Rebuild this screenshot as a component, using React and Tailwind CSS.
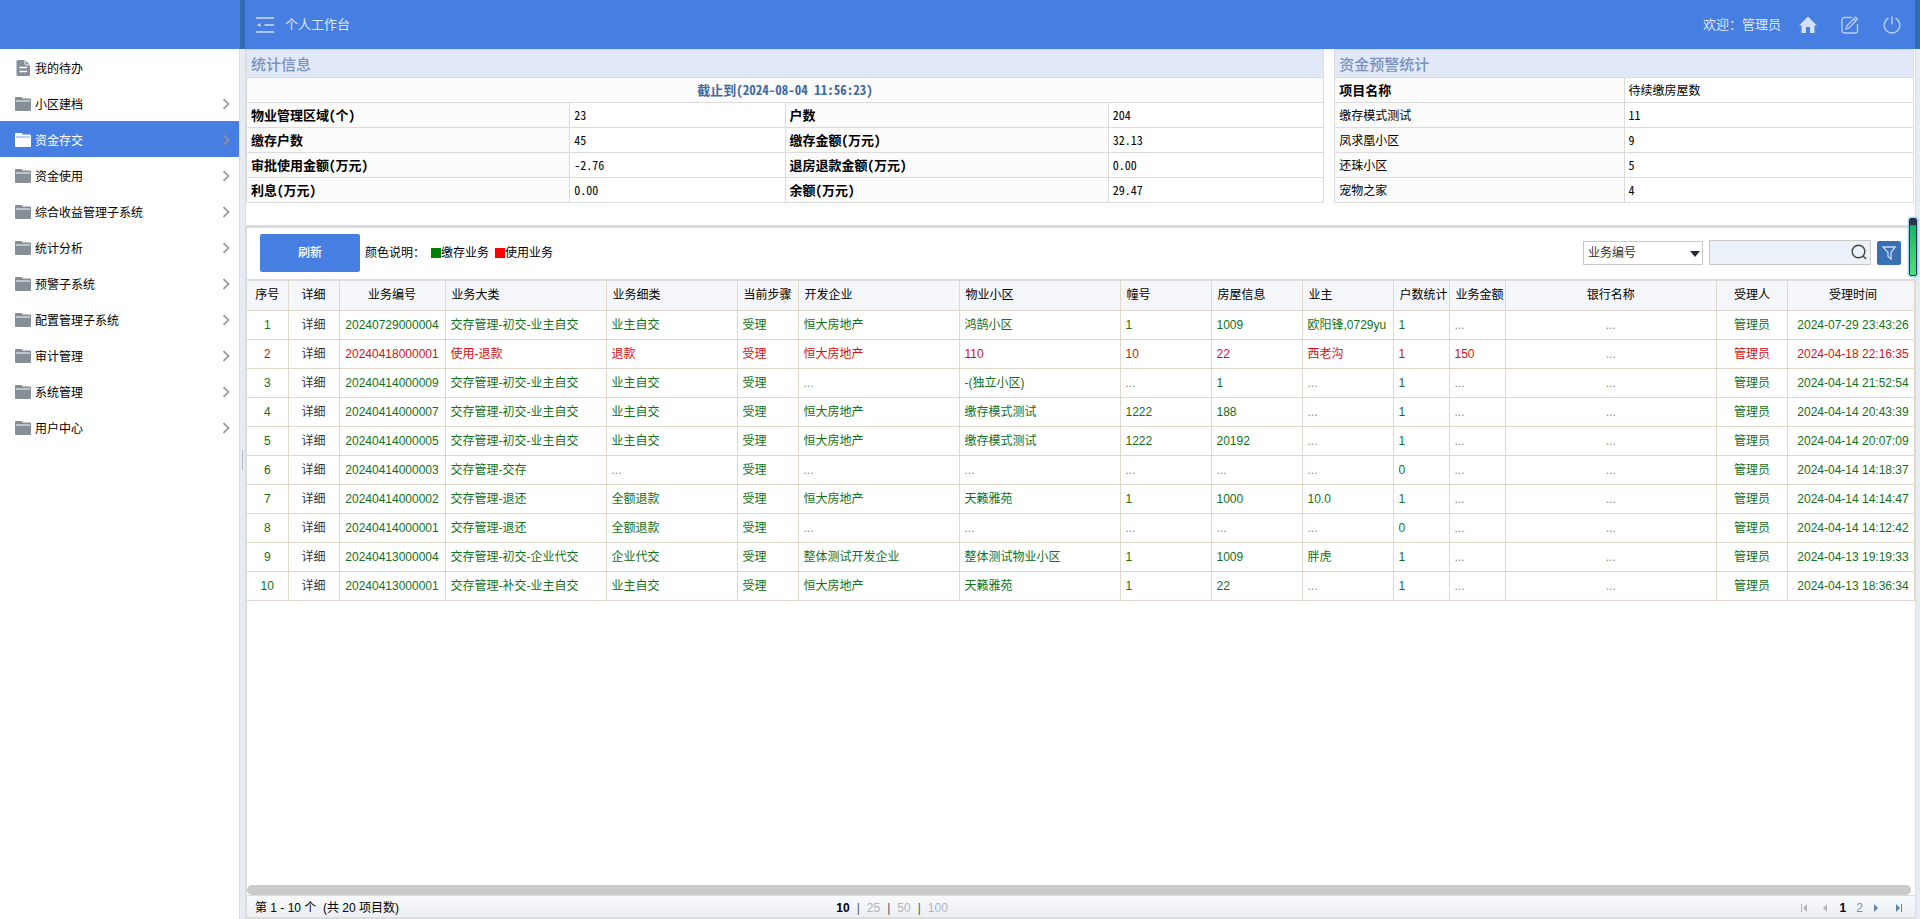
import { useState } from 'react';

const SANS = "font-['Liberation_Sans','Noto_Sans_CJK_SC',sans-serif]";
// half-width digits and brackets, so figures line up in the summary tables
const SONG = "font-['Noto_Sans_CJK_SC',sans-serif] [font-feature-settings:'hwid']";

const MENU = [
  '我的待办', '小区建档', '资金存交', '资金使用', '综合收益管理子系统', '统计分析',
  '预警子系统', '配置管理子系统', '审计管理', '系统管理', '用户中心',
];

const STATS = [
  ['物业管理区域(个)', '23', '户数', '204'],
  ['缴存户数', '45', '缴存金额(万元)', '32.13'],
  ['审批使用金额(万元)', '-2.76', '退房退款金额(万元)', '0.00'],
  ['利息(万元)', '0.00', '余额(万元)', '29.47'],
];

const WARNINGS = [
  ['缴存模式测试', '11'],
  ['凤求凰小区', '9'],
  ['还珠小区', '5'],
  ['宠物之家', '4'],
];

const COLUMNS = [
  { label: '序号', width: 'w-[41px]', center: true },
  { label: '详细', width: 'w-[51px]', center: true },
  { label: '业务编号', width: 'w-[106px]', center: true },
  { label: '业务大类', width: 'w-[161px]' },
  { label: '业务细类', width: 'w-[131px]' },
  { label: '当前步骤', width: 'w-[61px]' },
  { label: '开发企业', width: 'w-[161px]' },
  { label: '物业小区', width: 'w-[161px]' },
  { label: '幢号', width: 'w-[91px]' },
  { label: '房屋信息', width: 'w-[91px]' },
  { label: '业主', width: 'w-[91px]' },
  { label: '户数统计', width: 'w-[56px]' },
  { label: '业务金额', width: 'w-[56px]' },
  { label: '银行名称', width: '', center: true },
  { label: '受理人', width: 'w-[71px]', center: true },
  { label: '受理时间', width: 'w-[127px] pl-1', center: true },
];

const ROWS = [
  ['20240729000004', '交存管理-初交-业主自交', '业主自交', '受理', '恒大房地产', '鸿鹄小区', '1', '1009', '欧阳锋,0729yu', '1', '...', '...', '管理员', '2024-07-29 23:43:26'],
  ['20240418000001', '使用-退款', '退款', '受理', '恒大房地产', '110', '10', '22', '西老沟', '1', '150', '...', '管理员', '2024-04-18 22:16:35'],
  ['20240414000009', '交存管理-初交-业主自交', '业主自交', '受理', '...', '-(独立小区)', '...', '1', '...', '1', '...', '...', '管理员', '2024-04-14 21:52:54'],
  ['20240414000007', '交存管理-初交-业主自交', '业主自交', '受理', '恒大房地产', '缴存模式测试', '1222', '188', '...', '1', '...', '...', '管理员', '2024-04-14 20:43:39'],
  ['20240414000005', '交存管理-初交-业主自交', '业主自交', '受理', '恒大房地产', '缴存模式测试', '1222', '20192', '...', '1', '...', '...', '管理员', '2024-04-14 20:07:09'],
  ['20240414000003', '交存管理-交存', '...', '受理', '...', '...', '...', '...', '...', '0', '...', '...', '管理员', '2024-04-14 14:18:37'],
  ['20240414000002', '交存管理-退还', '全额退款', '受理', '恒大房地产', '天籁雅苑', '1', '1000', '10.0', '1', '...', '...', '管理员', '2024-04-14 14:14:47'],
  ['20240414000001', '交存管理-退还', '全额退款', '受理', '...', '...', '...', '...', '...', '0', '...', '...', '管理员', '2024-04-14 14:12:42'],
  ['20240413000004', '交存管理-初交-企业代交', '企业代交', '受理', '整体测试开发企业', '整体测试物业小区', '1', '1009', '胖虎', '1', '...', '...', '管理员', '2024-04-13 19:19:33'],
  ['20240413000001', '交存管理-补交-业主自交', '业主自交', '受理', '恒大房地产', '天籁雅苑', '1', '22', '...', '1', '...', '...', '管理员', '2024-04-13 18:36:34'],
];

const DocIcon = () => (
  <svg width="16" height="16" viewBox="0 0 16 16" className="shrink-0">
    <path d="M3 0h7l5 5v9.500q0 1.500-1.500 1.500H3q-1.500 0-1.500-1.500V1.500Q1.500 0 3 0z" fill="#868f98" />
    <path d="M10 0v3.500q0 1.500 1.500 1.500H15" fill="none" stroke="#fff" />
    <path d="M4.500 7.500h7.500M4.500 11.500h7.500" stroke="#fff" strokeWidth="1.500" />
  </svg>
);

const FolderIcon = ({ active }) => (
  <svg width="16" height="14" viewBox="0 0 16 14" className="shrink-0">
    <path d="M1 0h5.500l1.500 1.500h7q1 0 1 1V13q0 1-1 1H1q-1 0-1-1V1q0-1 1-1z" fill={active ? '#fff' : '#868f98'} />
    <path d="M1 4h14" stroke={active ? '#8fb1ec' : '#e8ebee'} strokeWidth="1.200" />
  </svg>
);

const Chevron = () => (
  <svg width="8" height="12" viewBox="0 0 8 12" fill="none" stroke="#959595" strokeWidth="1.700">
    <path d="M1.500 1.200l5 4.800-5 4.800" />
  </svg>
);

const Sidebar = ({ active, onSelect }) => (
  <nav className="w-[239px] shrink-0 bg-white">
    <ul>
      {MENU.map((label, i) => (
        <li key={label}>
          <button
            onClick={() => onSelect(label)}
            className={`flex h-9 w-full items-center pt-[2px] pr-[9px] pl-[15px] text-xs ${
              active === label ? 'bg-[#477ee1] text-white' : 'text-black'
            }`}
          >
            {i === 0 ? <DocIcon /> : <FolderIcon active={active === label} />}
            <span className="ml-1 flex-1 pt-px text-left">{label}</span>
            {i > 0 && <Chevron />}
          </button>
        </li>
      ))}
    </ul>
  </nav>
);

const Header = () => (
  <header className="flex h-[49px] shrink-0 bg-[#477ee1] text-[13px] text-[#dde8fa]">
    <div className="w-60 shrink-0" />
    <div className="w-[5px] shrink-0 bg-[#336bb0]" />
    <div className="flex flex-1 items-center pl-[11px] pr-[14px]">
      <button aria-label="收起菜单">
        <svg width="18" height="18" viewBox="0 0 18 18" fill="none" stroke="#cfe0f8" strokeWidth="1.500">
          <path d="M0 2h18M8.500 9H18M0 16h18" />
          <path d="M4.500 7v4L1 9z" fill="#cfe0f8" stroke="none" />
        </svg>
      </button>
      <h1 className="ml-[11px] flex-1">个人工作台</h1>
      <span>欢迎：管理员</span>
      <button aria-label="首页" className="ml-[18px]">
        <svg width="18" height="18" viewBox="0 0 18 18" fill="#d3e1f7">
          <path d="M9 0.500L18 9.500H15.500V17H11V11H7V17H2.500V9.500H0z" />
        </svg>
      </button>
      <button aria-label="编辑" className="ml-6">
        <svg width="18" height="18" viewBox="0 0 18 18" fill="none" stroke="#b8cff4" strokeWidth="1.300">
          <path d="M11 1.500H3.500Q1 1.500 1 4v10.500Q1 17 3.500 17h10.500q2.500 0 2.500-2.500V8" />
          <path d="M14.500 1.200l2 2L8 12l-3 1 1-3.200zM12.800 3l2 2" />
        </svg>
      </button>
      <button aria-label="退出" className="ml-6">
        <svg width="18" height="18" viewBox="0 0 18 18" fill="none" stroke="#b8cff4" strokeWidth="1.400">
          <path d="M5.500 2.200a7.800 7.800 0 1 0 7 0M9 0.500v8" />
        </svg>
      </button>
    </div>
    <div className="w-[5px] shrink-0 bg-[#336bb0]" />
  </header>
);

const LABEL = 'h-[25px] bg-[#fbfbfb] border border-[#dcdcdc] px-1 text-left';
const VALUE = 'h-[25px] bg-white border border-[#dcdcdc] px-1';
const CAPTION = 'h-7 bg-[#e1e8f7] border border-[#dcdcdc] px-1 text-left text-[15px] leading-5 font-medium text-[#7891bd]';

const StatsTable = () => (
  <table className={`w-[64.6%] flex-none table-fixed border-collapse text-xs leading-4 ${SONG}`}>
    <colgroup>
      <col className="w-[30%]" />
      <col className="w-[20%]" />
      <col className="w-[30%]" />
      <col className="w-[20%]" />
    </colgroup>
    <tbody>
      <tr><th colSpan={4} className={CAPTION}>统计信息</th></tr>
      <tr>
        <th colSpan={4} className="h-[25px] bg-[#fbfbfb] border border-[#dcdcdc] text-center text-[13px] text-[#4169a5]">
          截止到(2024-08-04 11:56:23)
        </th>
      </tr>
      {STATS.map(([a, b, c, d]) => (
        <tr key={a}>
          <th className={`${LABEL} text-[13px] font-bold`}>{a}</th>
          <td className={VALUE}>{b}</td>
          <th className={`${LABEL} text-[13px] font-bold`}>{c}</th>
          <td className={VALUE}>{d}</td>
        </tr>
      ))}
    </tbody>
  </table>
);

const WarningTable = () => (
  <table className={`mr-px ml-[10px] flex-1 table-fixed border-collapse text-xs leading-4 ${SONG}`}>
    <tbody>
      <tr><th colSpan={2} className={CAPTION}>资金预警统计</th></tr>
      <tr>
        <th className={`${LABEL} w-1/2 text-[13px] font-bold`}>项目名称</th>
        <td className={VALUE}>待续缴房屋数</td>
      </tr>
      {WARNINGS.map(([name, count]) => (
        <tr key={name}>
          <th className={`${LABEL} font-normal`}>{name}</th>
          <td className={VALUE}>{count}</td>
        </tr>
      ))}
    </tbody>
  </table>
);

const Toolbar = () => (
  <div className="flex h-[51px] shrink-0 items-center pr-[14px] pb-[2px] pl-[13px] text-xs">
    <button className="h-[38px] w-[100px] rounded-xs bg-[#477ee1] font-medium text-white">刷新</button>
    <span className="ml-[5px]">颜色说明：</span>
    <span className="ml-[6px] size-[10px] bg-[#008000]" />
    <span>缴存业务</span>
    <span className="ml-[6px] size-[10px] bg-[#ff0000]" />
    <span>使用业务</span>
    <div className="relative ml-auto">
      <select aria-label="查询字段" className="block h-6 w-[120px] appearance-none border border-[#c8c8c8] bg-white px-1 text-xs text-[#333]">
        <option>业务编号</option>
      </select>
      <svg width="10" height="6" viewBox="0 0 10 6" className="pointer-events-none absolute top-[10px] right-[3px]">
        <path d="M0 0h10L5 6z" fill="#222838" />
      </svg>
    </div>
    <div className="relative ml-[6px]">
      <input aria-label="查询内容" className="block h-[25px] w-[162px] border border-[#c8c8c8] bg-[#eaf1f9] pl-1 pr-7 text-xs" />
      <svg width="16" height="16" viewBox="0 0 16 16" fill="none" stroke="#444" strokeWidth="1.400" className="absolute top-1 right-1">
        <circle cx="7.500" cy="7.500" r="6.300" />
        <path d="M12 12l3 3" />
      </svg>
    </div>
    <button aria-label="筛选" className="ml-[6px] flex size-6 items-center justify-center rounded-xs bg-[#3a6fb3]">
      <svg width="14" height="14" viewBox="0 0 14 14" fill="none" stroke="#c9dcf3" strokeWidth="1.300">
        <path d="M1 1h12L9 6.500V13L6 10.500v-4z" />
      </svg>
    </button>
  </div>
);

const BusinessTable = () => (
  <table className="w-full table-fixed border-collapse text-xs leading-4 whitespace-nowrap">
    <thead>
      <tr className="h-[29px] bg-[#f4f6fa] text-black">
        {COLUMNS.map((col) => (
          <th
            key={col.label}
            className={`${col.width} border-r border-b border-[#e0d9cb] font-normal ${
              col.center ? 'text-center' : 'pl-[6px] text-left'
            }`}
          >
            {col.label}
          </th>
        ))}
      </tr>
    </thead>
    <tbody>
      {ROWS.map((row, r) => (
        <tr key={row[0]} className={`h-[29px] ${r === 1 ? 'text-[#d40f14]' : 'text-[#12701a]'}`}>
          {[String(r + 1), '详细', ...row].map((cell, c) => (
            <td
              key={c}
              className={`border-r border-b border-[#e0d9cb] ${
                COLUMNS[c].center ? 'text-center' : 'pl-[5px]'
              } ${c === 15 ? 'pl-1' : ''} ${cell === '...' ? 'text-[#888]' : ''}`}
            >
              {c === 1 ? <a href="#detail" className="text-[#333]">{cell}</a> : cell}
            </td>
          ))}
        </tr>
      ))}
    </tbody>
  </table>
);

const PageArrow = ({ label, flip, edge, color }) => (
  <button aria-label={label}>
    <svg width="8" height="8" viewBox="0 0 8 8" fill={color} className={flip ? 'rotate-180' : ''}>
      <path d="M1 0l4 4-4 4z" />
      {edge && <path d="M6 0h1v8H6z" />}
    </svg>
  </button>
);

const Pager = () => (
  <footer className="grid h-6 shrink-0 grid-cols-3 items-center border-t border-b-2 border-[#dcdcdc] bg-linear-to-b from-[#f8fafc] to-[#eceff2] pt-[2px] pr-3 pl-2 text-xs">
    <span>第 1 - 10 个&nbsp; (共 20 项目数)</span>
    <div className="flex justify-start gap-[7px] pl-8 text-[#b0b5bb]">
      <button className="font-bold text-black">10</button>
      <span className="text-[#555]">|</span>
      <button>25</button>
      <span className="text-[#555]">|</span>
      <button>50</button>
      <span className="text-[#555]">|</span>
      <button>100</button>
    </div>
    <div className="flex items-center justify-end">
      <PageArrow label="首页" flip edge color="#b5b8bb" />
      <span className="w-3" />
      <PageArrow label="上一页" flip color="#b5b8bb" />
      <button className="ml-3 font-bold text-black">1</button>
      <button className="mx-[10px] text-[#6f8fb5]">2</button>
      <PageArrow label="下一页" color="#5b86b0" />
      <span className="w-[14px]" />
      <PageArrow label="末页" edge color="#5b86b0" />
    </div>
  </footer>
);

export default function App() {
  const [active, setActive] = useState('资金存交');

  return (
    <div className={`relative flex h-screen flex-col overflow-hidden bg-[#e7ebf2] ${SANS}`}>
      <Header />
      <div className="flex min-h-0 flex-1">
        <Sidebar active={active} onSelect={setActive} />
        <div className="flex w-[7px] shrink-0 items-center justify-center border-x border-[#dcdcdc] pb-[49px]">
          <span className="h-5 w-px bg-[#b4bccb]" />
        </div>
        <main className="flex min-w-0 flex-1 flex-col bg-white">
          <section className="flex h-[179px] shrink-0 items-start border-b-3 border-[#dcdcdc]">
            <StatsTable />
            <WarningTable />
          </section>
          <section className="flex min-h-0 flex-1 flex-col border-l border-[#dcdcdc]">
            <Toolbar />
            <div className="min-h-0 flex-1 overflow-hidden border-t-2 border-[#dcdcdc]">
              <BusinessTable />
            </div>
            <div className="mr-1 h-[10px] shrink-0 rounded-full bg-[#cbcbcb]" />
            <Pager />
          </section>
        </main>
        <div className="w-[5px] shrink-0 border-l border-[#dcdcdc]" />
      </div>
      {/* floating level meter on the window edge */}
      <div className="absolute top-[218px] right-[3px] h-[58px] w-2 rounded-xs border border-[#17395f] bg-linear-to-b from-[#2c3342] from-10% via-[#12b85c] via-12% to-[#4fe07a] shadow-[0_0_2px_1px_#7cc4f5]" />
    </div>
  );
}
